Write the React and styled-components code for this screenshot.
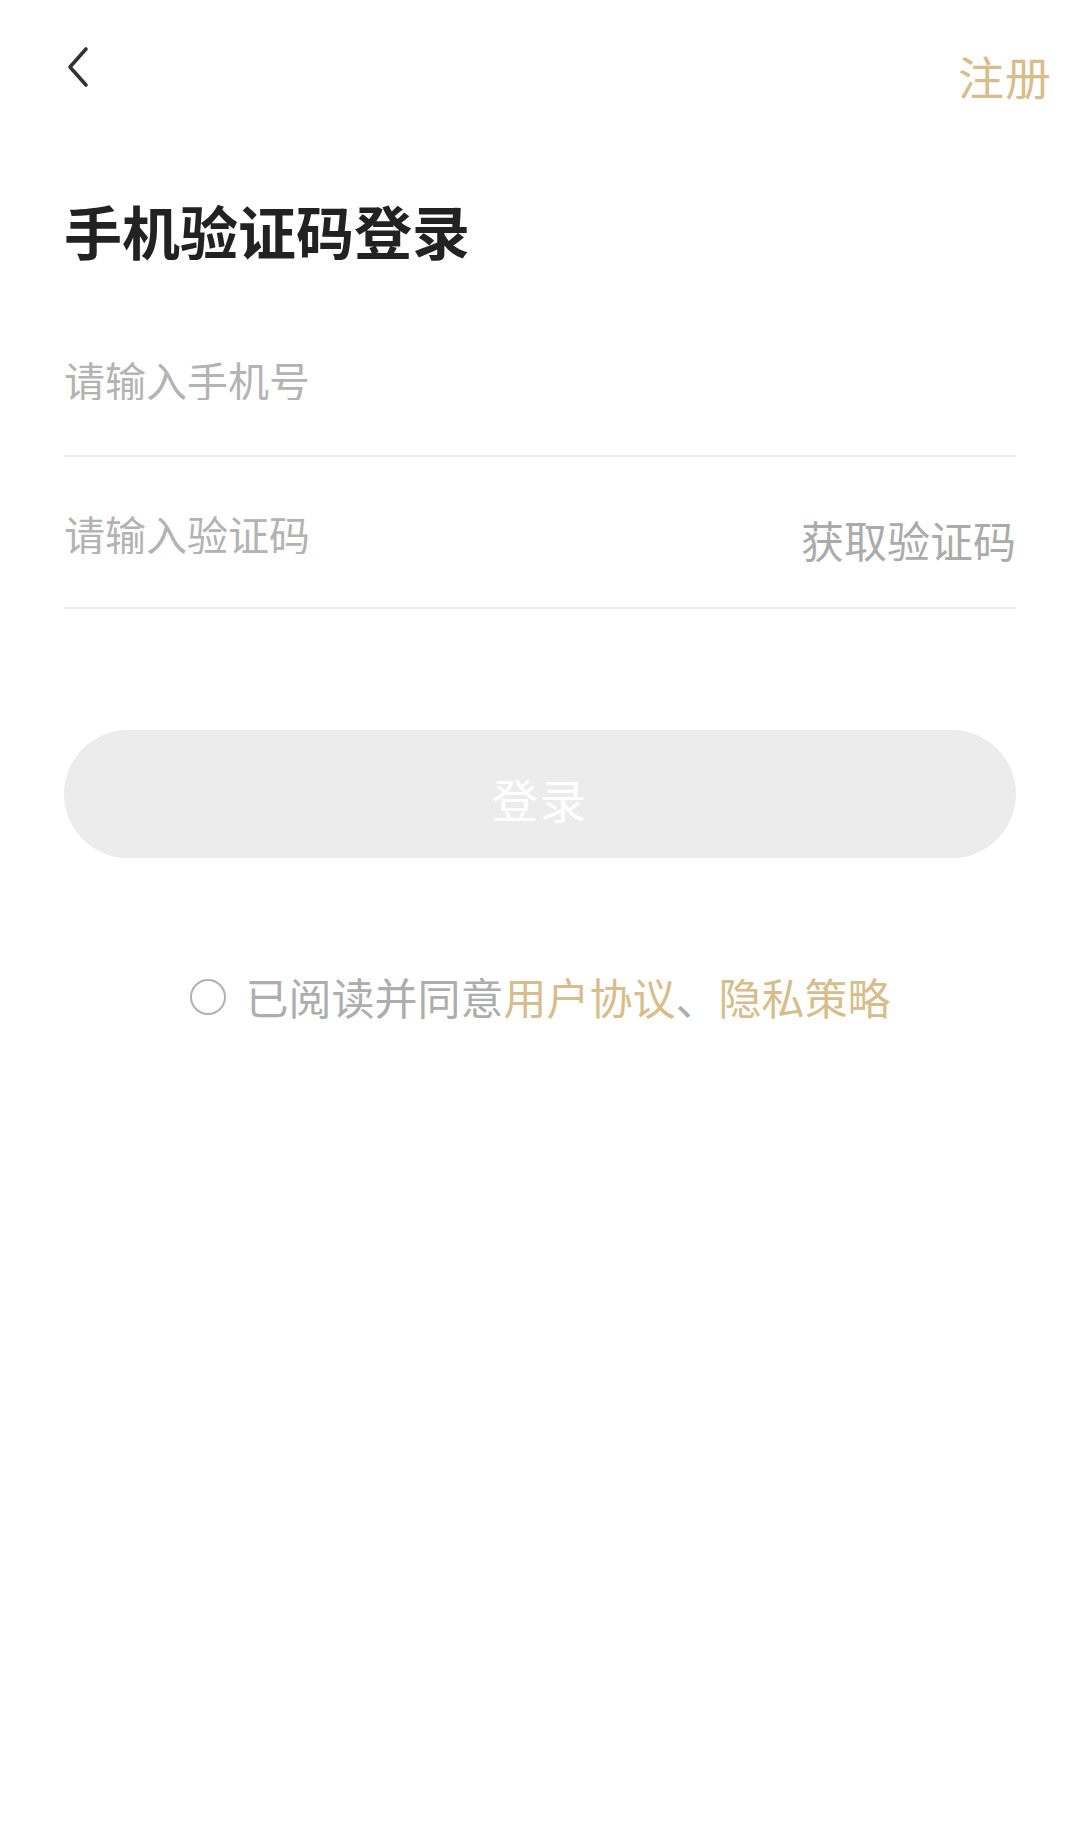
import React, { useState } from 'react'
import styled, { createGlobalStyle } from 'styled-components'

const GlobalStyle = createGlobalStyle`
	html, body {
		margin: 0;
		padding: 0;
		background: #fff;
	}
	* {
		box-sizing: border-box;
	}
`

const Page = styled.div`
	width: 1080px;
	min-height: 1836px;
	background: #fff;
	font-family: 'Noto Sans CJK SC', 'Noto Sans', sans-serif;
	display: flex;
	flex-direction: column;
`

const Header = styled.div`
	height: 120px;
	display: flex;
	justify-content: space-between;
	align-items: flex-start;
	padding: 0 28px 0 64px;
`

const Back = styled.button`
	margin-top: 46px;
	width: 28px;
	height: 42px;
	padding: 0;
	border: none;
	background: transparent;
	display: flex;
	align-items: center;
	justify-content: center;
	cursor: pointer;
`

const Register = styled.span`
	margin-top: 52px;
	font-size: 46px;
	line-height: 46px;
	color: #d7bd8c;
	letter-spacing: 1px;
`

const Content = styled.div`
	padding: 0 64px;
	display: flex;
	flex-direction: column;
`

const Title = styled.h1`
	margin: 81px 0 0;
	font-size: 58px;
	line-height: 58px;
	font-weight: 700;
	color: #222;
`

const Form = styled.form`
	margin-top: 44px;
	display: flex;
	flex-direction: column;
`

const Field = styled.div`
	height: ${props => props.height}px;
	display: flex;
	align-items: flex-start;
	padding-top: ${props => props.top}px;
	border-bottom: 2px solid #ebebeb;
`

const Input = styled.input`
	flex: 1;
	min-width: 0;
	height: 42px;
	padding: 0;
	border: none;
	outline: none;
	background: transparent;
	font-family: inherit;
	font-size: 41px;
	line-height: 42px;
	color: #333;
	&::placeholder {
		color: #b3b3b3;
	}
`

const CodeButton = styled.span`
	margin-top: 6px;
	font-size: 43px;
	line-height: 43px;
	color: #ababab;
	white-space: nowrap;
`

const Submit = styled.button`
	margin-top: 121px;
	height: 128px;
	padding: 8px 0 0;
	border: none;
	border-radius: 64px;
	background: #ececec;
	color: #fff;
	font-family: inherit;
	font-size: 46px;
	letter-spacing: 2px;
	cursor: pointer;
`

const Agreement = styled.label`
	margin-top: 117px;
	display: flex;
	justify-content: center;
	align-items: center;
	gap: 20px;
	font-size: 43px;
	line-height: 43px;
	color: #adadad;
	cursor: pointer;
`

const Radio = styled.span`
	width: 36px;
	height: 36px;
	border-radius: 50%;
	border: 2.5px solid #b0b0b0;
	background: ${props => (props.checked ? '#d7bd8c' : 'transparent')};
`

const Link = styled.span`
	color: #d7bd8c;
`

export default function App() {
	const [agreed, setAgreed] = useState(false)

	return (
		<Page>
			<GlobalStyle />
			<Header>
				<Back aria-label="返回">
					<svg width="24" height="42" viewBox="0 0 24 42" fill="none">
						<path d="M20 3 L4 21 L20 39" stroke="#333" strokeWidth="3.6" strokeLinecap="round" strokeLinejoin="round" />
					</svg>
				</Back>
				<Register>注册</Register>
			</Header>
			<Content>
				<Title>手机验证码登录</Title>
				<Form onSubmit={e => e.preventDefault()}>
					<Field height={154} top={55}>
						<Input type="tel" placeholder="请输入手机号" />
					</Field>
					<Field height={152} top={55}>
						<Input type="text" placeholder="请输入验证码" />
						<CodeButton>获取验证码</CodeButton>
					</Field>
					<Submit type="submit">登录</Submit>
				</Form>
				<Agreement onClick={() => setAgreed(!agreed)}>
					<Radio checked={agreed} />
					<span>
						已阅读并同意<Link>用户协议</Link>、<Link>隐私策略</Link>
					</span>
				</Agreement>
			</Content>
		</Page>
	)
}
